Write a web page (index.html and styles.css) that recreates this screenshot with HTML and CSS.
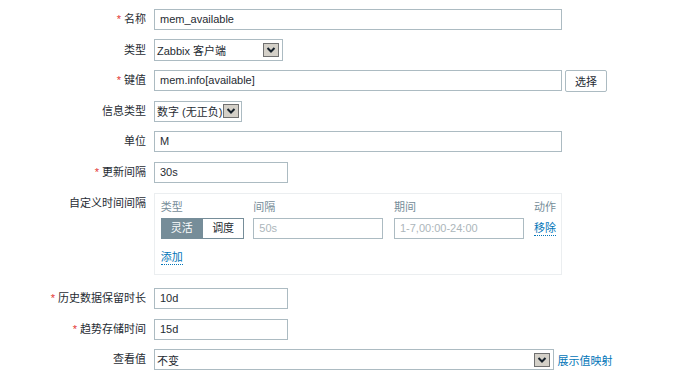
FILE: index.html
```html
<!DOCTYPE html>
<html lang="zh">
<head>
<meta charset="utf-8">
<title>监控项</title>
<link rel="stylesheet" href="styles.css">
</head>
<body>
<form class="form">
  <div class="row">
    <label class="lbl"><span class="req">*</span>名称</label>
    <div class="field"><div class="input w-full">mem_available</div></div>
  </div>
  <div class="row">
    <label class="lbl">类型</label>
    <div class="field">
      <div class="select w-type"><span>Zabbix 客户端</span>
        <svg class="arrow" width="16" height="14" viewBox="0 0 16 14"><rect x="0.5" y="0.5" width="15" height="13" fill="#d4d0c8" stroke="#707070"/><polyline points="4.5,5 8,8.5 11.5,5" fill="none" stroke="#15202b" stroke-width="2"/></svg>
      </div>
    </div>
  </div>
  <div class="row">
    <label class="lbl"><span class="req">*</span>键值</label>
    <div class="field">
      <div class="input w-full">mem.info[available]</div>
      <button type="button" class="btn">选择</button>
    </div>
  </div>
  <div class="row">
    <label class="lbl">信息类型</label>
    <div class="field">
      <div class="select w-info"><span>数字 (无正负)</span>
        <svg class="arrow" width="16" height="14" viewBox="0 0 16 14"><rect x="0.5" y="0.5" width="15" height="13" fill="#d4d0c8" stroke="#707070"/><polyline points="4.5,5 8,8.5 11.5,5" fill="none" stroke="#15202b" stroke-width="2"/></svg>
      </div>
    </div>
  </div>
  <div class="row">
    <label class="lbl">单位</label>
    <div class="field"><div class="input w-full">M</div></div>
  </div>
  <div class="row">
    <label class="lbl"><span class="req">*</span>更新间隔</label>
    <div class="field"><div class="input w-small">30s</div></div>
  </div>
  <div class="row row-top">
    <label class="lbl">自定义时间间隔</label>
    <div class="field">
      <div class="box">
        <div class="grid">
          <div class="th">类型</div>
          <div class="th">间隔</div>
          <div class="th">期间</div>
          <div class="th">动作</div>
          <div class="toggle"><span class="seg on">灵活</span><span class="seg">调度</span></div>
          <div class="input ph w-int">50s</div>
          <div class="input ph w-per">1-7,00:00-24:00</div>
          <div class="act"><a class="link dotted">移除</a></div>
        </div>
        <div class="add"><a class="link dotted">添加</a></div>
      </div>
    </div>
  </div>
  <div class="row">
    <label class="lbl"><span class="req">*</span>历史数据保留时长</label>
    <div class="field"><div class="input w-small">10d</div></div>
  </div>
  <div class="row">
    <label class="lbl"><span class="req">*</span>趋势存储时间</label>
    <div class="field"><div class="input w-small">15d</div></div>
  </div>
  <div class="row">
    <label class="lbl">查看值</label>
    <div class="field">
      <div class="select w-look"><span>不变</span>
        <svg class="arrow" width="16" height="14" viewBox="0 0 16 14"><rect x="0.5" y="0.5" width="15" height="13" fill="#d4d0c8" stroke="#707070"/><polyline points="4.5,5 8,8.5 11.5,5" fill="none" stroke="#15202b" stroke-width="2"/></svg>
      </div>
      <a class="link map">展示值映射</a>
    </div>
  </div>
</form>
</body>
</html>
```

FILE: styles.css
```css
* { box-sizing: border-box; }
html, body { margin: 0; padding: 0; background: #fff; }
body {
  font-family: "Liberation Sans", "Noto Sans CJK SC", Arial, sans-serif;
  font-size: 11px;
  color: #1f2c33;
  width: 688px;
  height: 374px;
  overflow: hidden;
}
.form { padding-top: 9px; }
.row {
  display: flex;
  align-items: center;
  margin-bottom: 9.6px;
  height: 21px;
}
.row-top { align-items: flex-start; margin-bottom: 13.4px; height: auto; }
.lbl {
  width: 146px;
  text-align: right;
  line-height: 21px;
  flex: none;
  white-space: nowrap;
}
.req { color: #e33734; margin-right: 3px; }
.field {
  margin-left: 8px;
  display: flex;
  align-items: center;
}
.input {
  height: 21px;
  line-height: 19px;
  border: 1px solid #acbbc2;
  background: #fff;
  padding: 0 5px;
  white-space: nowrap;
  color: #1f2c33;
}
.w-full { width: 408px; }
.w-small { width: 134px; }
.ph { color: #acb6bb; }
.w-int { width: 129.4px; }
.w-per { width: 130.3px; }
.select {
  height: 21.4px;
  border: 1px solid #acbbc2;
  display: flex;
  align-items: center;
  justify-content: space-between;
  padding: 0 3px 0 2px;
  white-space: nowrap;
}
.w-type { width: 129px; }
.w-info { width: 88px; padding-right: 2px; }
.w-look { width: 400px; }
.arrow { display: block; flex: none; }
.btn {
  margin-left: 3px;
  height: 22px;
  width: 42px;
  border: 1px solid #acbbc2;
  border-radius: 2px;
  background: #fff;
  font: inherit;
  color: #1f2c33;
  padding: 0;
}
.link { color: #0275b8; text-decoration: none; }
.map { margin-left: 3.5px; }
.dotted {
  display: inline-block;
  line-height: 12px;
  padding-bottom: 1px;
  border-bottom: 1px dotted #0275b8;
}
.box {
  width: 408px;
  height: 82px;
  border: 1px solid #ebeef0;
  padding: 5px 0 0 5.7px;
}
.grid {
  display: grid;
  grid-template-columns: 92.6px 140.7px 140px auto;
  grid-template-rows: 16px 21px;
  row-gap: 3.4px;
  align-items: center;
}
.th { color: #768d99; line-height: 16px; }
.toggle { display: flex; width: 83.6px; height: 21.4px; }
.seg {
  flex: 1;
  text-align: center;
  line-height: 19.4px;
  border: 1px solid #768d99;
  background: #fff;
  color: #1f2c33;
}
.seg.on { background: #768d99; color: #fff; }
.seg + .seg { border-left: none; }
.act { line-height: 21px; }
.add { margin-top: 12px; }
```
